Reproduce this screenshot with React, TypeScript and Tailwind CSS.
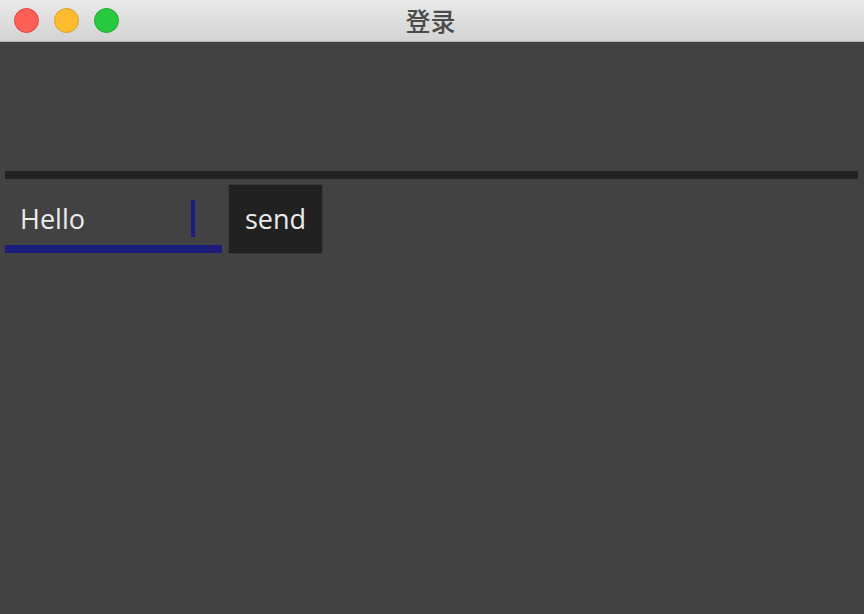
import React from 'react';

const App = () => {
  return (
    <div className="w-[864px] h-[614px] flex flex-col bg-[#424242] overflow-hidden" style={{ fontFamily: '"Open Sans", "Noto Sans CJK SC", sans-serif' }}>
      {/* title bar */}
      <div className="relative h-[42px] shrink-0 flex items-center bg-gradient-to-b from-[#e9e9e9] to-[#d3d3d3] border-b border-[#b4b4b4]">
        <div className="flex items-center gap-[15px] pl-[14px]">
          <span className="w-[25px] h-[25px] rounded-full bg-[#fe5f57] border border-[#e2463f]" />
          <span className="w-[25px] h-[25px] rounded-full bg-[#febc2e] border border-[#dfa023]" />
          <span className="w-[25px] h-[25px] rounded-full bg-[#28c840] border border-[#1dad2b]" />
        </div>
        <div className="absolute inset-0 flex items-center justify-center text-[25px] font-medium text-[#4a4a4a]" style={{ fontFamily: '"Noto Sans CJK SC", sans-serif' }}>
          <span className="ml-[-3px]">登录</span>
        </div>
      </div>

      {/* content */}
      <div className="px-[5px] pt-[129px]">
        <div className="h-[8px] w-[853px] bg-[#222222]" />
        <div className="flex items-start gap-[6px] mt-[5px]">
          <div className="relative w-[217px] h-[69px] border-b-[8px] border-[#1c1c7c]">
            <span className="absolute left-[15px] top-[21px] text-[27px] leading-none text-[#ececec]">Hello</span>
            <span className="absolute left-[186px] top-[16px] w-[4px] h-[37px] bg-[#1c1c7c]" />
          </div>
          <button className="w-[95px] h-[70px] bg-[#212121] border border-[#3a3a3a] text-[27px] leading-none text-[#ececec] flex items-center justify-center pb-[2px]">
            send
          </button>
        </div>
      </div>
    </div>
  );
};

export default App;
